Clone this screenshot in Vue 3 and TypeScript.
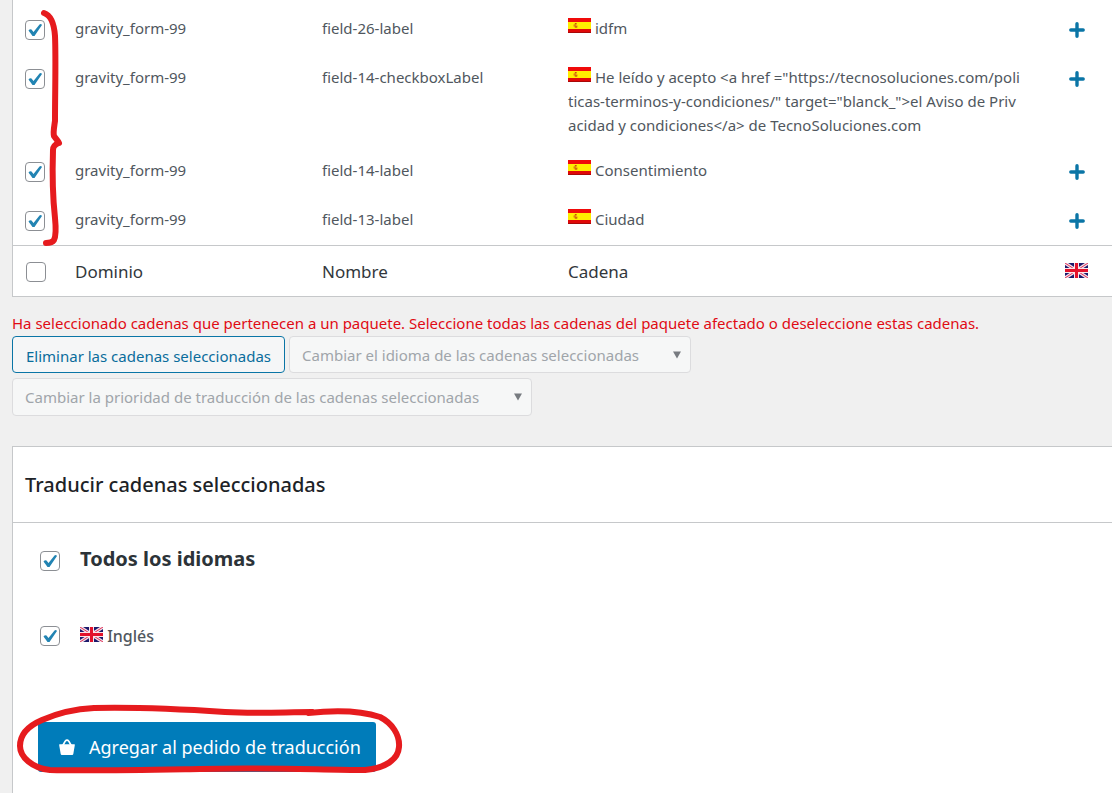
<script setup lang="ts">
import { ref } from 'vue'

interface StringRow {
  id: number
  domain: string
  name: string
  lines: string[]
  checked: boolean
}

const rows = ref<StringRow[]>([
  { id: 1, domain: 'gravity_form-99', name: 'field-26-label', lines: ['idfm'], checked: true },
  {
    id: 2,
    domain: 'gravity_form-99',
    name: 'field-14-checkboxLabel',
    lines: [
      'He leído y acepto <a href ="https://tecnosoluciones.com/poli',
      'ticas-terminos-y-condiciones/" target="blanck_">el Aviso de Priv',
      'acidad y condiciones</a> de TecnoSoluciones.com',
    ],
    checked: true,
  },
  { id: 3, domain: 'gravity_form-99', name: 'field-14-label', lines: ['Consentimiento'], checked: true },
  { id: 4, domain: 'gravity_form-99', name: 'field-13-label', lines: ['Ciudad'], checked: true },
])

const selectAll = ref(false)
const allLanguages = ref(true)
const english = ref(true)
</script>

<template>
  <div class="page">
    <svg class="defs" width="0" height="0" aria-hidden="true">
      <symbol id="flag-es" viewBox="0 0 23 15">
        <rect width="23" height="15" fill="#fe0" />
        <rect width="23" height="4" fill="#f00a0a" />
        <rect y="11" width="23" height="4" fill="#e00808" />
        <rect y="14" width="23" height="1" fill="#a80808" />
        <path d="M6.500 5.500h2.500v1h-1v1h1.500v2h-3v-1h-1v-2h1z" fill="#e0850c" />
        <path d="M7 5h1.500v1h-1.500zM7 8.500h2v1h-2z" fill="#c8500c" />
      </symbol>
      <symbol id="flag-en" viewBox="0 0 23 15">
        <rect width="23" height="15" fill="#1c1a6c" />
        <path d="M0 0L23 15M23 0L0 15" stroke="#f3dfe8" stroke-width="3.400" />
        <path d="M0 0L23 15M23 0L0 15" stroke="#e0335a" stroke-width="1" />
        <path d="M11.500 0V15M0 7.500H23" stroke="#fbe4e8" stroke-width="5" />
        <path d="M11.500 0V15M0 7.500H23" stroke="#e3122c" stroke-width="3" />
      </symbol>
    </svg>

    <table class="strings">
      <colgroup>
        <col class="c-check" />
        <col class="c-domain" />
        <col class="c-name" />
        <col />
        <col class="c-action" />
      </colgroup>
      <tbody>
        <tr v-for="row in rows" :key="row.id">
          <td class="check">
            <input v-model="row.checked" type="checkbox" :aria-label="row.name" />
          </td>
          <td>{{ row.domain }}</td>
          <td>{{ row.name }}</td>
          <td class="value">
            <svg class="flag" role="img" aria-label="Español"><use href="#flag-es" /></svg>
            <template v-for="(line, i) in row.lines" :key="i"><br v-if="i > 0" />{{ line }}</template>
          </td>
          <td class="action">
            <button class="add" type="button" aria-label="Añadir traducción">
              <svg width="16" height="16" viewBox="0 0 16 16">
                <path d="M8 1.800V14.200M1.800 8H14.200" stroke="#0a75a6" stroke-width="3.400" stroke-linecap="round" />
              </svg>
            </button>
          </td>
        </tr>
      </tbody>
      <tfoot>
        <tr>
          <td class="check">
            <input v-model="selectAll" type="checkbox" aria-label="Seleccionar todo" />
          </td>
          <th scope="col">Dominio</th>
          <th scope="col">Nombre</th>
          <th scope="col" class="value">Cadena</th>
          <th scope="col" class="action">
            <svg class="flag" role="img" aria-label="Inglés"><use href="#flag-en" /></svg>
          </th>
        </tr>
      </tfoot>
    </table>

    <p class="warning">
      Ha seleccionado cadenas que pertenecen a un paquete. Seleccione todas las cadenas del paquete afectado o deseleccione estas cadenas.
    </p>

    <div class="actions">
      <button class="remove" type="button">Eliminar las cadenas seleccionadas</button>
      <div class="picker language">
        <select disabled aria-label="Cambiar el idioma">
          <option>Cambiar el idioma de las cadenas seleccionadas</option>
        </select>
        <svg width="10" height="8" viewBox="0 0 10 8"><path d="M1 .5H9L5 7.500Z" fill="#777b80" /></svg>
      </div>
      <div class="picker priority">
        <select disabled aria-label="Cambiar la prioridad">
          <option>Cambiar la prioridad de traducción de las cadenas seleccionadas</option>
        </select>
        <svg width="10" height="8" viewBox="0 0 10 8"><path d="M1 .5H9L5 7.500Z" fill="#777b80" /></svg>
      </div>
    </div>

    <section class="panel">
      <h2>Traducir cadenas seleccionadas</h2>
      <div class="panel-body">
        <label class="all">
          <input v-model="allLanguages" type="checkbox" />
          <span>Todos los idiomas</span>
        </label>
        <label class="lang">
          <input v-model="english" type="checkbox" />
          <span><svg class="flag" aria-hidden="true"><use href="#flag-en" /></svg> Inglés</span>
        </label>
        <button class="submit" type="button">
          <svg width="16" height="16" viewBox="0 0 16 16">
            <path d="M3.500 7L6.200 2.200Q8 .2 9.800 2.200L12.500 7" fill="none" stroke="#fff" stroke-width="1.700" />
            <path d="M.6 5.300H15.400Q16 5.300 15.800 6.300L14.300 15Q14.100 16 13.200 16H2.800Q1.900 16 1.700 15L.2 6.300Q0 5.300 .6 5.300Z" fill="#fff" />
          </svg>
          Agregar al pedido de traducción
        </button>
      </div>
    </section>

    <svg class="marks" width="420" height="793" viewBox="0 0 420 793" aria-hidden="true">
      <g fill="none" stroke="#e61b1e" stroke-width="6" stroke-linecap="round" stroke-linejoin="round">
        <path d="M44 13C50 15 54 22 55 36C56 60 55 90 55 121C54 128 53 132 54 136C56 139 58 141 59 143C56 144 53 146 53 150C52 180 53 200 55 218C56 228 56 236 54 240C52 243 49 243 46 243" />
        <path d="M308 713C335 710 362 711 380 717C392 723 400 735 399 747C398 760 385 768 365 770C320 770 270 767 200 769C140 770 90 771 50 770C32 768 20 757 20 746C20 734 28 726 42 720C60 712 75 709 94 708C140 707 180 709 225 712C260 714 285 712 312 712" />
      </g>
    </svg>
  </div>
</template>

<style>
html,
body {
  margin: 0;
  background: #f0f0f0;
}
</style>

<style scoped>
.page {
  position: relative;
  box-sizing: border-box;
  min-height: 100vh;
  padding: 6px 0 0 12px;
  display: flex;
  flex-direction: column;
  overflow: hidden;
  background: linear-gradient(#fff, #fff) 13px 0 / 100% 6px no-repeat, linear-gradient(#c6c8ca, #c6c8ca) 12px 0 / 1px 6px no-repeat, #f0f0f0;
  color: #50575e;
  font-family: "Noto Sans", "Open Sans", sans-serif;
  font-size: 15px;
  line-height: 24px;
}

.defs,
.marks {
  position: absolute;
  top: 0;
  left: 0;
  pointer-events: none;
}

input[type='checkbox'] {
  appearance: none;
  flex: none;
  display: block;
  box-sizing: border-box;
  width: 20px;
  height: 20px;
  margin: 0;
  border: 1px solid #8c8f94;
  border-radius: 4px;
  background: #fff;
}

input[type='checkbox']:checked::before {
  content: '';
  display: block;
  width: 18px;
  height: 18px;
  background: #2284b3;
  clip-path: path('M2.500 9.500Q4 7.500 5.500 8.500L7.500 11L13.500 3.500Q15 2.500 16 4L8.500 15H6.500Z');
}

.flag {
  width: 23px;
  height: 15px;
}

.strings {
  width: 100%;
  table-layout: fixed;
  border-collapse: separate;
  border-spacing: 0;
  border: solid #c6c8ca;
  border-width: 0 0 1px 1px;
  background: #fff;
}

.strings tbody .flag {
  margin: 0 4px 1px 0;
}

.c-check {
  width: 49px;
}

.c-domain,
.c-name {
  width: 247px;
}

.c-action {
  width: 71px;
}

.strings td,
.strings th {
  padding: 10px 0 11px 13px;
  vertical-align: top;
  text-align: left;
  font-weight: 400;
}

.strings tbody tr {
  height: 49px;
}

.strings tbody tr:last-child {
  height: 48px;
}

.strings td.check {
  padding: 14px 0 0 12px;
}

.strings .value {
  padding-left: 12px;
  white-space: nowrap;
}

.strings td.action,
.strings th.action {
  padding: 16px 0 0;
  text-align: center;
}

.strings tfoot td,
.strings tfoot th {
  height: 51px;
  box-sizing: border-box;
  padding-top: 14px;
  padding-bottom: 0;
  border-top: 1px solid #c6c8ca;
  color: #32373c;
  font-size: 17px;
}

.strings tfoot td.check {
  padding: 16px 0 0 13px;
}

.strings tfoot th.action {
  padding-top: 14px;
}

.add {
  display: block;
  width: 16px;
  height: 16px;
  margin: 0 auto;
  padding: 0;
  border: 0;
  background: none;
}

.add svg {
  display: block;
}

.warning {
  margin: 14px 0 1px;
  color: #e00b14;
  white-space: nowrap;
}

.actions {
  display: flex;
  flex-wrap: wrap;
  gap: 5px 4px;
}

.remove {
  box-sizing: border-box;
  width: 273px;
  height: 37px;
  padding: 2px 0 0;
  border: 1px solid #0a75a6;
  border-radius: 4px;
  background: #f5f6f7;
  color: #0a6d9c;
  font: inherit;
  white-space: nowrap;
}

.picker {
  display: grid;
  align-items: center;
}

.picker > * {
  grid-area: 1 / 1;
}

.picker svg {
  justify-self: end;
  margin-right: 9px;
  pointer-events: none;
}

.picker select {
  appearance: none;
  box-sizing: border-box;
  width: 100%;
  height: 38px;
  padding: 0 24px 0 12px;
  border: 1px solid #dcdcde;
  border-radius: 4px;
  background: #f6f7f7;
  color: #a0a5aa;
  opacity: 1;
  font: inherit;
}

.language {
  width: 402px;
}

.language select {
  height: 37px;
}

.priority {
  width: 520px;
}

.panel {
  flex: 1;
  margin-top: 30px;
  border: solid #c6c8ca;
  border-width: 1px 0 0 1px;
  background: #fff;
}

.panel h2 {
  margin: 0;
  padding: 24px 12px 23px;
  border-bottom: 1px solid #c6c8ca;
  color: #1d2327;
  font-size: 20px;
  line-height: 28px;
  font-weight: 500;
}

.panel-body {
  display: flex;
  flex-direction: column;
  align-items: flex-start;
  padding: 24px 25px;
}

.panel-body label {
  display: flex;
  gap: 20px;
  padding-left: 2px;
}

.all {
  align-items: flex-end;
  color: #2c3338;
  font-size: 20px;
  font-weight: 700;
}

.lang {
  align-items: center;
  margin-top: 53px;
  font-size: 16px;
  font-weight: 500;
}

.submit {
  display: flex;
  align-items: center;
  gap: 14px;
  box-sizing: border-box;
  width: 338px;
  height: 50px;
  margin-top: 74px;
  padding: 0 0 0 21px;
  border: 0;
  border-radius: 3px;
  background: #007cba;
  color: #fff;
  font: inherit;
  font-size: 18px;
  white-space: nowrap;
}
</style>
